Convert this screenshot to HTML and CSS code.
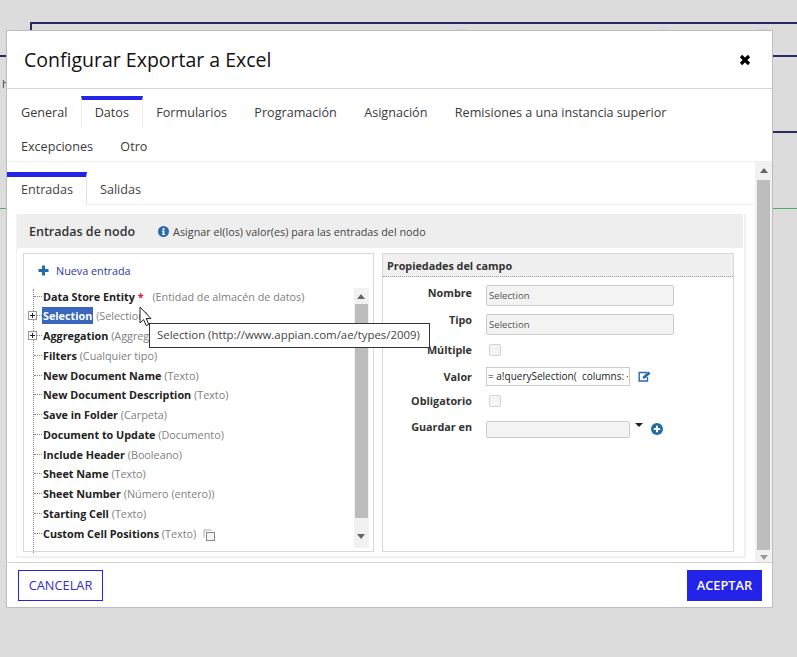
FILE: index.html
```html
<!DOCTYPE html>
<html lang="es">
<head>
    <meta charset="UTF-8">
    <title>Configurar Exportar a Excel</title>
    <link rel="stylesheet" href="styles.css">
</head>
<body>

<div class="backdrop">
    <div class="bg-line bg-top"></div>
    <div class="bg-line bg-top-left"></div>
    <div class="bg-line bg-left"></div>
    <div class="bg-line bg-right-1"></div>
    <div class="bg-line bg-right-2"></div>
    <div class="bg-green"></div>
    <div class="bg-dot bg-dot-1"></div>
    <div class="bg-dot bg-dot-2"></div>
    <div class="bg-dot bg-dot-3"></div>
    <span class="bg-letter">h</span>
</div>

<div class="modal">
    <div class="modal-header">
        <h1>Configurar Exportar a Excel</h1>
        <svg class="close-icon" width="12" height="12" viewBox="0 0 12 12">
            <path d="M2 2L10 10M10 2L2 10" stroke="#000" stroke-width="3.2" fill="none"/>
        </svg>
    </div>

    <div class="tabs">
        <div class="tab">General</div>
        <div class="tab active">Datos</div>
        <div class="tab">Formularios</div>
        <div class="tab">Programación</div>
        <div class="tab">Asignación</div>
        <div class="tab">Remisiones a una instancia superior</div>
        <div class="tab">Excepciones</div>
        <div class="tab">Otro</div>
    </div>

    <div class="modal-body">
        <div class="content">
            <div class="subtabs">
                <div class="subtab active">Entradas</div>
                <div class="subtab">Salidas</div>
            </div>

            <div class="inputs-panel">
                <div class="inputs-header">
                    <h2>Entradas de nodo</h2>
                    <svg class="info-icon" width="11" height="11" viewBox="0 0 11 11">
                        <circle cx="5.5" cy="5.5" r="5.5" fill="#2a6aa8"/>
                        <rect x="4.6" y="2" width="1.9" height="1.8" fill="#fff"/>
                        <path d="M3.9 4.6H6.4V8H7.2V9H3.9V8H4.6V5.6H3.9Z" fill="#fff"/>
                    </svg>
                    <span>Asignar el(los) valor(es) para las entradas del nodo</span>
                </div>

                <div class="inputs-columns">
                    <div class="tree-panel">
                        <div class="new-entry">
                            <svg width="11" height="11" viewBox="0 0 11 11">
                                <path d="M5.5 0.5V10.5M0.5 5.5H10.5" stroke="#1f6ca8" stroke-width="3" fill="none"/>
                            </svg>
                            <span>Nueva entrada</span>
                        </div>

                        <div class="tree-wrap">
                            <ul class="tree">
                                <li><b>Data Store Entity</b> <i class="required">*</i> <span class="type first-type">(Entidad de almacén de datos)</span></li>
                                <li class="has-children"><span class="expander"></span><b class="selected">Selection</b> <span class="type">(Selection)</span></li>
                                <li class="has-children"><span class="expander"></span><b>Aggregation</b> <span class="type">(Aggregation)</span></li>
                                <li><b>Filters</b> <span class="type">(Cualquier tipo)</span></li>
                                <li><b>New Document Name</b> <span class="type">(Texto)</span></li>
                                <li><b>New Document Description</b> <span class="type">(Texto)</span></li>
                                <li><b>Save in Folder</b> <span class="type">(Carpeta)</span></li>
                                <li><b>Document to Update</b> <span class="type">(Documento)</span></li>
                                <li><b>Include Header</b> <span class="type">(Booleano)</span></li>
                                <li><b>Sheet Name</b> <span class="type">(Texto)</span></li>
                                <li><b>Sheet Number</b> <span class="type">(Número (entero))</span></li>
                                <li><b>Starting Cell</b> <span class="type">(Texto)</span></li>
                                <li><b>Custom Cell Positions</b> <span class="type">(Texto)</span>
                                    <svg class="copy-icon" width="13" height="12" viewBox="0 0 13 12">
                                        <path d="M1 8.5V1H8.5" stroke="#aaa" fill="none"/>
                                        <rect x="3.5" y="3.5" width="8" height="8" stroke="#888" fill="#f4f4f4"/>
                                    </svg>
                                </li>
                            </ul>
                            <div class="scrollbar tree-scroll">
                                <div class="arrow-up"></div>
                                <div class="thumb"></div>
                                <div class="arrow-down"></div>
                            </div>
                        </div>

                        <div class="tooltip">Selection (http://www.appian.com/ae/types/2009)</div>
                        <svg class="cursor" width="14" height="22" viewBox="0 0 14 22">
                            <path d="M1 1V17L4.6 13.6L7.2 19.6L9.8 18.4L7.2 12.6H12Z" fill="#fff" stroke="#222" stroke-width="1"/>
                        </svg>
                    </div>

                    <div class="props-panel">
                        <div class="props-header">Propiedades del campo</div>
                        <div class="fields">
                            <label class="label-up">Nombre</label>
                            <input class="text-input" type="text" value="Selection" readonly>

                            <label class="label-up-more">Tipo</label>
                            <input class="text-input" type="text" value="Selection" readonly>

                            <label class="label-nudge">Múltiple</label>
                            <div class="check"></div>

                            <label>Valor</label>
                            <div class="control-row">
                                <input class="value-input" type="text" value="= a!querySelection(  columns: {" readonly>
                                <svg class="edit-icon" width="13" height="11" viewBox="0 0 13 11">
                                    <path d="M9 1.5H1.2V10H9.5V6" stroke="#2a6aa8" stroke-width="1.4" fill="none"/>
                                    <path d="M4.5 7.6L5 5.4L10.4 0.4L12.6 2.4L7 7.6Z" fill="#2a6aa8"/>
                                </svg>
                            </div>

                            <label class="label-nudge">Obligatorio</label>
                            <div class="check"></div>

                            <label class="label-up">Guardar en</label>
                            <div class="control-row">
                                <div class="select-box"></div>
                                <div class="caret"></div>
                                <svg class="add-icon" width="12" height="12" viewBox="0 0 12 12">
                                    <circle cx="6" cy="6" r="6" fill="#1f6ca8"/>
                                    <path d="M6 2.8V9.2M2.8 6H9.2" stroke="#fff" stroke-width="2"/>
                                </svg>
                            </div>
                        </div>
                    </div>
                </div>
            </div>
        </div>

        <div class="scrollbar body-scroll">
            <div class="arrow-up"></div>
            <div class="thumb"></div>
            <div class="arrow-down"></div>
        </div>
    </div>

    <div class="modal-footer">
        <button class="btn-cancel">CANCELAR</button>
        <button class="btn-ok">ACEPTAR</button>
    </div>
</div>

</body>
</html>
```

FILE: styles.css
```css
* {
    box-sizing: border-box;
}

html, body {
    height: 100%;
}

body {
    margin: 0;
    padding: 30px 0 0 6px;
    background-color: #dcdcdc;
    font-family: "Open Sans", sans-serif;
    color: #333;
    overflow: hidden;
}

/* Pagina por tras do modal */
.backdrop {
    position: absolute;
    top: 0;
    left: 0;
    width: 797px;
    height: 657px;
    overflow: hidden;
}

.bg-line {
    position: absolute;
    height: 2px;
    background-color: #2b2b63;
}

.bg-top {
    top: 22px;
    left: 30px;
    right: 0;
}

.bg-top-left {
    top: 22px;
    left: 30px;
    width: 2px;
    height: 9px;
}

.bg-left {
    top: 55px;
    left: 0;
    width: 6px;
}

.bg-right-1 {
    top: 55px;
    left: 773px;
    right: 0;
}

.bg-right-2 {
    top: 131px;
    left: 773px;
    right: 0;
}

.bg-green {
    position: absolute;
    top: 208px;
    left: 0;
    right: 0;
    height: 1px;
    background-color: #4caf68;
}

.bg-dot {
    position: absolute;
    top: 27px;
    width: 16px;
    height: 16px;
    border-radius: 50%;
    background-color: #d5d5e2;
}

.bg-dot-1 {
    left: 453px;
}

.bg-dot-2 {
    left: 655px;
}

.bg-dot-3 {
    left: 755px;
}

.bg-letter {
    position: absolute;
    top: 76px;
    left: 2px;
    font-size: 11px;
    color: #444;
}

/* Modal */
.modal {
    position: relative;
    display: flex;
    flex-direction: column;
    width: 767px;
    height: 578px;
    background-color: #fff;
    border: 1px solid #bdbdbd;
}

.modal-header {
    display: flex;
    justify-content: space-between;
    align-items: center;
    flex: none;
    height: 58px;
    padding: 0 21px 0 17px;
    border-bottom: 1px solid #d4d4d4;
}

h1 {
    margin: 0;
    font-size: 19.5px;
    font-weight: 400;
    color: #111;
}

.close-icon {
    display: block;
}

.tabs {
    display: flex;
    flex-wrap: wrap;
    align-content: flex-start;
    row-gap: 2px;
    flex: none;
    height: 73px;
    padding: 7px 0 0 0.3px;
    border-bottom: 1px solid #eee;
}

.tab {
    height: 32px;
    padding: 1px 13.7px 0;
    font-size: 12.6px;
    line-height: 32px;
    color: #3a3a3a;
    white-space: nowrap;
}

.tab.active {
    padding: 1px 12.7px 0;
    border-top: 4px solid #2323ea;
    border-left: 1px solid #eee;
    border-right: 1px solid #eee;
    line-height: 24px;
}

.modal-body {
    display: flex;
    flex: none;
    height: 400px;
}

.content {
    flex: 1;
    min-width: 0;
}

.subtabs {
    display: flex;
    height: 43px;
    padding-top: 10px;
    border-bottom: 1px solid #eee;
}

.subtab {
    padding: 1px 13px 0;
    font-size: 12.6px;
    line-height: 33px;
    color: #444;
}

.subtab.active {
    width: 80px;
    padding: 1px 14px 0;
    border-top: 5px solid #2323ea;
    border-right: 1px solid #e4e4e4;
    line-height: 23px;
    height: 33px;
    background-color: #fff;
}

.inputs-panel {
    height: 344px;
    margin: 9px 9px 0 9px;
    border-right: 2px solid #f0f0f0;
    border-bottom: 2px solid #f0f0f0;
    border-left: 1px solid #f4f4f4;
}

.inputs-header {
    display: flex;
    align-items: center;
    height: 34px;
    margin-right: 1px;
    padding-left: 12px;
    background-color: #eee;
    font-size: 10.8px;
    color: #444;
}

.inputs-header h2 {
    margin: 0 23px 0 0;
    font-size: 12.5px;
    font-weight: 600;
    color: #333;
}

.info-icon {
    margin-right: 4px;
}

.inputs-columns {
    display: flex;
    gap: 8px;
    padding: 5px 0 0 6px;
}

.tree-panel {
    position: relative;
    width: 351px;
    height: 299px;
    border: 1px solid #d8d8d8;
}

.new-entry {
    display: flex;
    align-items: center;
    gap: 7px;
    height: 34px;
    padding: 0 0 2px 14px;
    font-size: 10.8px;
    color: #2c3a9c;
}

.tree-wrap {
    display: flex;
    justify-content: space-between;
    height: 260px;
    padding-right: 4px;
}

.tree {
    position: relative;
    margin: -1.4px 0 0 0;
    padding: 0 0 0 19px;
    list-style: none;
    font-size: 10.8px;
    line-height: 19.75px;
    white-space: nowrap;
}

/* linha pontilhada da arvore */
.tree::before {
    content: "";
    position: absolute;
    top: 2px;
    bottom: -5px;
    left: 9px;
    border-left: 1px dotted #888;
}

.tree li {
    position: relative;
    height: 19.75px;
}

.tree li::before {
    content: "";
    position: absolute;
    top: 9px;
    left: -9px;
    width: 8px;
    border-top: 1px dotted #888;
}

.tree b {
    font-weight: 700;
    color: #222;
}

.tree b.selected {
    padding: 1px;
    margin-left: -1px;
    background-color: #3a66bb;
    color: #fff;
}

.type {
    color: #808080;
}

.first-type {
    margin-left: 6px;
}

.required {
    font-style: normal;
    font-weight: 700;
    color: #d22;
}

.expander {
    position: absolute;
    top: 5px;
    left: -15px;
    z-index: 1;
    width: 9px;
    height: 9px;
    border: 1px solid #999;
    background:
        linear-gradient(#222, #222) center / 5px 1px no-repeat,
        linear-gradient(#222, #222) center / 1px 5px no-repeat,
        #fff;
}

.copy-icon {
    margin-left: 4px;
    vertical-align: -3px;
}

.scrollbar {
    display: flex;
    flex-direction: column;
    align-items: center;
    flex: none;
    background-color: #f1f1f1;
}

.tree-scroll {
    width: 15px;
    padding: 0 1px 0 0;
}

.body-scroll {
    width: 17px;
    height: 400px;
}

.thumb {
    background-color: #bdbdbd;
}

.tree-scroll .thumb {
    width: 13px;
    height: 214px;
    margin-top: 5px;
}

.body-scroll .thumb {
    width: 13px;
    height: 370px;
    margin-top: 7px;
}

.arrow-up {
    flex: none;
    width: 0;
    height: 0;
    margin-top: 6px;
    border-left: 4px solid transparent;
    border-right: 4px solid transparent;
    border-bottom: 5px solid #666;
}

.arrow-down {
    flex: none;
    width: 0;
    height: 0;
    margin-top: 16px;
    border-left: 4px solid transparent;
    border-right: 4px solid transparent;
    border-top: 5px solid #666;
}

.body-scroll .arrow-down {
    margin-top: 5px;
    border-top-color: #999;
}

.tooltip {
    position: absolute;
    top: 69px;
    left: 125px;
    z-index: 3;
    width: 281px;
    height: 25px;
    padding-left: 7px;
    border: 1px solid #333;
    background-color: #fff;
    font-size: 11.4px;
    line-height: 22px;
    color: #444;
    white-space: nowrap;
}

.cursor {
    position: absolute;
    top: 52px;
    left: 115px;
    z-index: 4;
}

.props-panel {
    width: 352px;
    height: 299px;
    border: 1px solid #d8d8d8;
}

.props-header {
    height: 23px;
    padding-left: 4px;
    background-color: #f0f0f0;
    border-bottom: 1px dotted #999;
    font-size: 10.8px;
    font-weight: 700;
    line-height: 24px;
    color: #333;
}

.fields {
    display: grid;
    grid-template-columns: 89px 1fr;
    grid-template-rows: 29px 29px 22px 30px 20px 36px;
    column-gap: 14px;
    padding-top: 4px;
}

.fields label {
    align-self: center;
    font-size: 10.8px;
    font-weight: 700;
    text-align: right;
    color: #333;
}

.fields .label-up {
    padding-bottom: 6px;
}

.fields .label-up-more {
    padding-bottom: 11px;
}

.fields .label-nudge {
    padding-bottom: 2px;
}

.text-input {
    align-self: center;
    width: 188px;
    height: 21px;
    padding: 0 2px;
    border: 1px solid #ccc;
    border-radius: 2px;
    background-color: #f3f3f3;
    font-family: inherit;
    font-size: 9.6px;
    color: #555;
    outline: none;
}

.check {
    align-self: center;
    width: 12px;
    height: 12px;
    margin-left: 3px;
    border: 1px solid #d4d4d4;
    border-radius: 2px;
    background-color: #f4f4f4;
}

.control-row {
    display: flex;
    align-items: center;
}

.value-input {
    width: 144px;
    height: 19px;
    padding: 0 1px;
    border: 1px solid #ccc;
    background-color: #fff;
    font-family: inherit;
    font-size: 10px;
    color: #222;
    outline: none;
}

.edit-icon {
    margin-left: 8px;
}

.select-box {
    width: 144px;
    height: 17px;
    border: 1px solid #ccc;
    border-radius: 2px;
    background-color: #f3f3f3;
}

.caret {
    width: 0;
    height: 0;
    margin: -9px 0 0 5px;
    border-left: 4px solid transparent;
    border-right: 4px solid transparent;
    border-top: 4px solid #222;
}

.add-icon {
    margin-left: 8px;
}

.modal-footer {
    display: flex;
    justify-content: space-between;
    align-items: flex-start;
    flex: 1;
    padding: 7px 10px 0 11px;
    border-top: 1px solid #d4d4d4;
}

.btn-cancel, .btn-ok {
    height: 31px;
    padding: 0 0 2px;
    border: 1px solid #2323ea;
    font-family: inherit;
    font-size: 12.8px;
    cursor: pointer;
}

.btn-cancel {
    width: 85px;
    background-color: #fff;
    color: #2f2fc8;
}

.btn-ok {
    width: 75px;
    background-color: #2323ea;
    color: #fff;
    font-weight: 600;
}
```
